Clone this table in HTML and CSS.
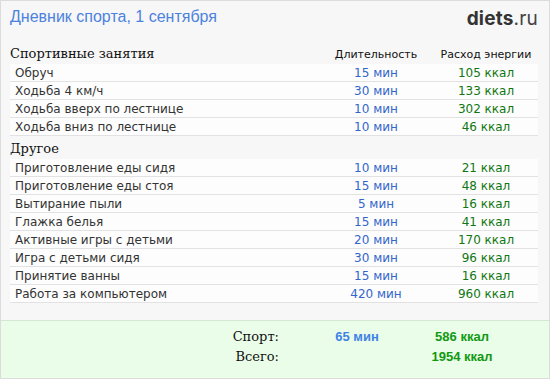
FILE: index.html
```html
<!DOCTYPE html>
<html lang="ru">
<head>
<meta charset="utf-8">
<title>Дневник спорта</title>
<link rel="stylesheet" href="styles.css">
</head>
<body>
<div class="page">
  <header class="top">
    <h1 class="title">Дневник спорта, 1 сентября</h1>
    <div class="logo"><b>diets</b>.ru</div>
  </header>
  <main class="diary">
    <div class="head-row">
      <div class="section">Спортивные занятия</div>
      <div class="colhead">Длительность</div>
      <div class="colhead">Расход энергии</div>
    </div>
    <div class="row"><span class="name">Обруч</span><span class="dur">15 мин</span><span class="kcal">105 ккал</span></div>
    <div class="row"><span class="name">Ходьба 4 км/ч</span><span class="dur">30 мин</span><span class="kcal">133 ккал</span></div>
    <div class="row"><span class="name">Ходьба вверх по лестнице</span><span class="dur">10 мин</span><span class="kcal">302 ккал</span></div>
    <div class="row"><span class="name">Ходьба вниз по лестнице</span><span class="dur">10 мин</span><span class="kcal">46 ккал</span></div>

    <div class="head-row second">
      <div class="section">Другое</div>
    </div>
    <div class="row"><span class="name">Приготовление еды сидя</span><span class="dur">10 мин</span><span class="kcal">21 ккал</span></div>
    <div class="row"><span class="name">Приготовление еды стоя</span><span class="dur">15 мин</span><span class="kcal">48 ккал</span></div>
    <div class="row"><span class="name">Вытирание пыли</span><span class="dur">5 мин</span><span class="kcal">16 ккал</span></div>
    <div class="row"><span class="name">Глажка белья</span><span class="dur">15 мин</span><span class="kcal">41 ккал</span></div>
    <div class="row"><span class="name">Активные игры с детьми</span><span class="dur">20 мин</span><span class="kcal">170 ккал</span></div>
    <div class="row"><span class="name">Игра с детьми сидя</span><span class="dur">30 мин</span><span class="kcal">96 ккал</span></div>
    <div class="row"><span class="name">Принятие ванны</span><span class="dur">15 мин</span><span class="kcal">16 ккал</span></div>
    <div class="row"><span class="name">Работа за компьютером</span><span class="dur">420 мин</span><span class="kcal">960 ккал</span></div>
  </main>
  <footer class="totals">
    <div class="trow"><span class="tlabel">Спорт:</span><span class="tdur">65 мин</span><span class="tkcal">586 ккал</span></div>
    <div class="trow"><span class="tlabel">Всего:</span><span class="tdur"></span><span class="tkcal">1954 ккал</span></div>
  </footer>
</div>
</body>
</html>
```
FILE: styles.css
```css
* { box-sizing: border-box; }
html, body { margin: 0; padding: 0; }
body { background: #fff; }
.page {
  width: 550px;
  height: 379px;
  border: 1px solid #dcdcdc;
  background: #f7f7f7;
  display: flex;
  flex-direction: column;
  font-family: "DejaVu Sans", Verdana, sans-serif;
}
.top {
  display: flex;
  justify-content: space-between;
  align-items: flex-start;
  padding: 6px 11px 0 9px;
  height: 39px;
}
.title {
  margin: 0;
  font-family: "Liberation Sans", Arial, sans-serif;
  font-weight: normal;
  font-size: 16px;
  color: #4c82de;
  line-height: 20px;
}
.logo {
  font-family: "Inter", "Open Sans", sans-serif;
  font-size: 19px;
  color: #444;
  line-height: 22px;
  padding-top: 1px;
  letter-spacing: 0.2px;
}
.logo b { font-weight: 700; color: #333; }
.diary {
  padding: 0 11px 0 9px;
}
.head-row {
  display: grid;
  grid-template-columns: 1fr 116px 104px;
  align-items: end;
  height: 24px;
  padding-bottom: 3px;
}
.head-row.second { height: 23px; }
.section {
  font-family: "DejaVu Serif", Georgia, serif;
  font-size: 13px;
  color: #111;
}
.colhead {
  text-align: center;
  font-size: 11px;
  color: #111;
}
.row {
  display: grid;
  grid-template-columns: 1fr 116px 104px;
  height: 18px;
  align-items: center;
  background: #fdfdfd;
  border-bottom: 1px solid #e2e2e2;
  font-size: 12px;
  line-height: 16px;
}
.name { padding-left: 5px; color: #333; }
.dur { text-align: center; color: #3366cc; }
.kcal { text-align: center; color: #117711; }
.totals {
  margin-top: auto;
  height: 58px;
  background: #eafde9;
  border-top: 1px solid #d4e6d4;
  padding-top: 5px;
}
.trow {
  display: flex;
  height: 20px;
  align-items: center;
}
.tlabel {
  width: 278px;
  text-align: right;
  font-family: "DejaVu Serif", Georgia, serif;
  font-size: 13px;
  color: #111;
}
.tdur {
  width: 100px;
  margin-left: 28px;
  text-align: center;
  font-family: "Liberation Sans", Arial, sans-serif;
  font-weight: bold;
  font-size: 13px;
  color: #3f83e6;
}
.tkcal {
  width: 100px;
  margin-left: 5px;
  text-align: center;
  font-family: "Liberation Sans", Arial, sans-serif;
  font-weight: bold;
  font-size: 13px;
  color: #119911;
}
```
